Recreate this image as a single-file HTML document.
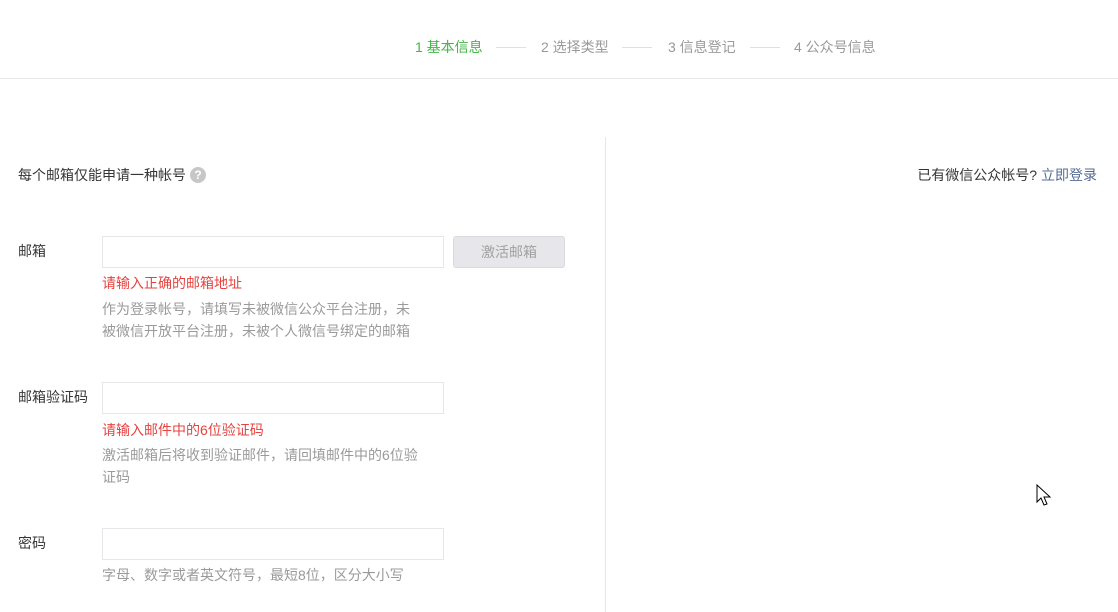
<!DOCTYPE html>
<html><head><meta charset="utf-8"><style>
body{margin:0;width:1118px;height:612px;overflow:hidden;background:#fff;font-family:"Liberation Sans","Noto Sans CJK SC",sans-serif;font-size:14px;color:#353535;position:relative}
.a{position:absolute;white-space:nowrap;line-height:22px}
.step{position:absolute;top:36px;line-height:22px;color:#9a9a9a}
.ln{position:absolute;top:47px;width:30px;height:1px;background:#e0e0e0}
.in{position:absolute;left:102px;width:340px;height:30px;border:1px solid #e7e7eb;background:#fff}
.err{color:#e64340}
.help{color:#9a9a9a}
</style></head><body>
<div class="step" style="left:415px;color:#44b549">1 基本信息</div>
<div class="ln" style="left:496px"></div>
<div class="step" style="left:541px">2 选择类型</div>
<div class="ln" style="left:622px"></div>
<div class="step" style="left:668px">3 信息登记</div>
<div class="ln" style="left:750px"></div>
<div class="step" style="left:794px">4 公众号信息</div>
<div style="position:absolute;left:0;top:78px;width:1118px;height:1px;background:#e7e7eb"></div>
<div style="position:absolute;left:605px;top:137px;width:1px;height:475px;background:#e7e7eb"></div>

<div class="a" style="left:18px;top:164px">每个邮箱仅能申请一种帐号</div>
<div style="position:absolute;left:190px;top:167px;width:16px;height:16px;border-radius:50%;background:#c7c7c7;color:#fff;font-size:12px;line-height:16px;text-align:center;font-weight:bold">?</div>
<div class="a" style="right:21px;top:164px">已有微信公众帐号? <span style="color:#576b95">立即登录</span></div>

<div class="a" style="left:18px;top:240px">邮箱</div>
<div class="in" style="top:236px"></div>
<div style="position:absolute;left:453px;top:236px;width:110px;height:30px;border:1px solid #dadade;border-radius:3px;background:#e7e7eb;color:#a0a0a0;text-align:center;line-height:30px">激活邮箱</div>
<div class="a err" style="left:102px;top:272px">请输入正确的邮箱地址</div>
<div class="a help" style="left:102px;top:298px">作为登录帐号，请填写未被微信公众平台注册，未<br>被微信开放平台注册，未被个人微信号绑定的邮箱</div>

<div class="a" style="left:18px;top:386px">邮箱验证码</div>
<div class="in" style="top:382px"></div>
<div class="a err" style="left:102px;top:419px">请输入邮件中的6位验证码</div>
<div class="a help" style="left:102px;top:444px">激活邮箱后将收到验证邮件，请回填邮件中的6位验<br>证码</div>

<div class="a" style="left:18px;top:532px">密码</div>
<div class="in" style="top:528px"></div>
<div class="a help" style="left:102px;top:564px">字母、数字或者英文符号，最短8位，区分大小写</div>

<svg style="position:absolute;left:1036px;top:484px" width="18" height="24" viewBox="0 0 18 24"><path d="M1 1 L1 18 L5 14 L8 21 L11 20 L8 13 L14 13 Z" fill="#fff" stroke="#000" stroke-width="1"/></svg>
</body></html>
